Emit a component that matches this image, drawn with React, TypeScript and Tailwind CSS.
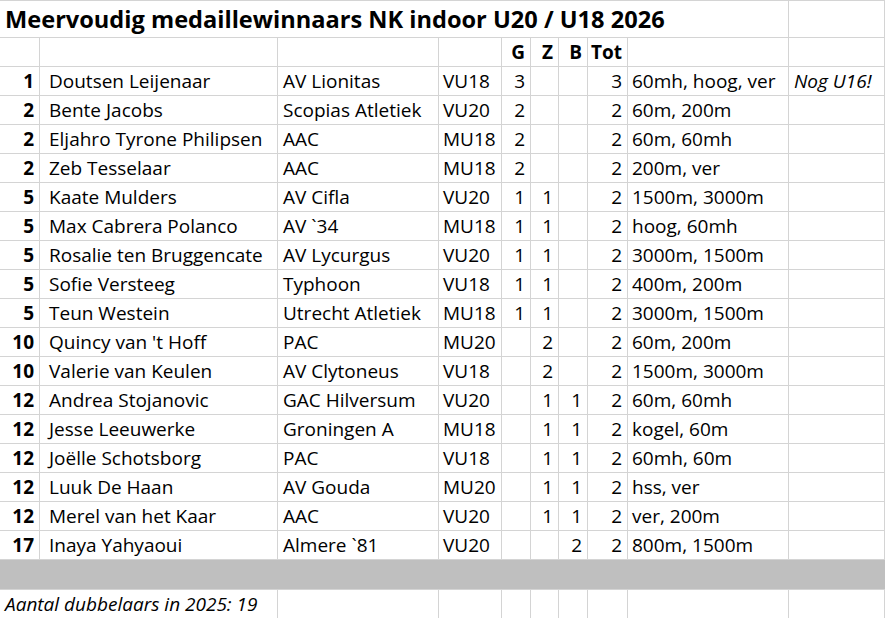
import React from "react";

type Row = {
  rank: string;
  name: string;
  club: string;
  cat: string;
  g: string;
  z: string;
  b: string;
  tot: string;
  events: string;
  note?: string;
};

const rows: Row[] = [
  { rank: "1", name: "Doutsen Leijenaar", club: "AV Lionitas", cat: "VU18", g: "3", z: "", b: "", tot: "3", events: "60mh, hoog, ver", note: "Nog U16!" },
  { rank: "2", name: "Bente Jacobs", club: "Scopias Atletiek", cat: "VU20", g: "2", z: "", b: "", tot: "2", events: "60m, 200m" },
  { rank: "2", name: "Eljahro Tyrone Philipsen", club: "AAC", cat: "MU18", g: "2", z: "", b: "", tot: "2", events: "60m, 60mh" },
  { rank: "2", name: "Zeb Tesselaar", club: "AAC", cat: "MU18", g: "2", z: "", b: "", tot: "2", events: "200m, ver" },
  { rank: "5", name: "Kaate Mulders", club: "AV Cifla", cat: "VU20", g: "1", z: "1", b: "", tot: "2", events: "1500m, 3000m" },
  { rank: "5", name: "Max Cabrera Polanco", club: "AV `34", cat: "MU18", g: "1", z: "1", b: "", tot: "2", events: "hoog, 60mh" },
  { rank: "5", name: "Rosalie ten Bruggencate", club: "AV Lycurgus", cat: "VU20", g: "1", z: "1", b: "", tot: "2", events: "3000m, 1500m" },
  { rank: "5", name: "Sofie Versteeg", club: "Typhoon", cat: "VU18", g: "1", z: "1", b: "", tot: "2", events: "400m, 200m" },
  { rank: "5", name: "Teun Westein", club: "Utrecht Atletiek", cat: "MU18", g: "1", z: "1", b: "", tot: "2", events: "3000m, 1500m" },
  { rank: "10", name: "Quincy van 't Hoff", club: "PAC", cat: "MU20", g: "", z: "2", b: "", tot: "2", events: "60m, 200m" },
  { rank: "10", name: "Valerie van Keulen", club: "AV Clytoneus", cat: "VU18", g: "", z: "2", b: "", tot: "2", events: "1500m, 3000m" },
  { rank: "12", name: "Andrea Stojanovic", club: "GAC Hilversum", cat: "VU20", g: "", z: "1", b: "1", tot: "2", events: "60m, 60mh" },
  { rank: "12", name: "Jesse Leeuwerke", club: "Groningen A", cat: "MU18", g: "", z: "1", b: "1", tot: "2", events: "kogel, 60m" },
  { rank: "12", name: "Joëlle Schotsborg", club: "PAC", cat: "VU18", g: "", z: "1", b: "1", tot: "2", events: "60mh, 60m" },
  { rank: "12", name: "Luuk De Haan", club: "AV Gouda", cat: "MU20", g: "", z: "1", b: "1", tot: "2", events: "hss, ver" },
  { rank: "12", name: "Merel van het Kaar", club: "AAC", cat: "VU20", g: "", z: "1", b: "1", tot: "2", events: "ver, 200m" },
  { rank: "17", name: "Inaya Yahyaoui", club: "Almere `81", cat: "VU20", g: "", z: "", b: "2", tot: "2", events: "800m, 1500m" },
];

const cell = "h-[29px] border-r border-b border-[#d4d4d4] flex items-end pb-[1px] whitespace-nowrap overflow-visible";
const left = `${cell} pl-[4px]`;
const right = `${cell} justify-end pr-[5px]`;

const App: React.FC = () => {
  return (
    <div
      className="w-[885px] h-[618px] bg-white text-black text-[19px] leading-[26px] overflow-hidden"
      style={{ fontFamily: "'Open Sans', Lato, sans-serif" }}
    >
      <div className="grid grid-cols-[40px_238px_161px_63px_29px_28px_29px_40px_161px_96px] border-t border-[#d4d4d4]">
        {/* title */}
        <div className="col-span-9 h-[37px] border-r border-b border-[#d4d4d4] flex items-end pb-[2px] pl-[5px] whitespace-nowrap text-[23.6px] leading-[32px] font-bold">
          Meervoudig medaillewinnaars NK indoor U20 / U18 2026
        </div>
        <div className="h-[37px] border-r border-b border-[#d4d4d4]" />

        {/* header */}
        <div className={cell} />
        <div className={cell} />
        <div className={cell} />
        <div className={cell} />
        <div className={`${right} font-bold`}>G</div>
        <div className={`${right} font-bold`}>Z</div>
        <div className={`${right} font-bold`}>B</div>
        <div className={`${right} font-bold`}>Tot</div>
        <div className={cell} />
        <div className={cell} />

        {rows.map((r, i) => (
          <React.Fragment key={i}>
            <div className={`${right} pr-[4px] font-bold`}>{r.rank}</div>
            <div className={`${left} pl-[9px]`}>{r.name}</div>
            <div className={`${left} pl-[5px]`}>{r.club}</div>
            <div className={left}>{r.cat}</div>
            <div className={right}>{r.g}</div>
            <div className={right}>{r.z}</div>
            <div className={right}>{r.b}</div>
            <div className={right}>{r.tot}</div>
            <div className={`${left} pl-[3px]`}>{r.events}</div>
            <div className={`${left} pl-[5px] italic`}>{r.note ?? ""}</div>
          </React.Fragment>
        ))}

        {/* gray separator */}
        <div className="col-span-10 h-[30px] bg-[#bfbfbf] border-b border-[#d4d4d4]" />

        {/* footer */}
        <div className={`col-span-2 ${left} pl-[5px] italic`}>Aantal dubbelaars in 2025: 19</div>
        <div className={cell} />
        <div className={cell} />
        <div className={cell} />
        <div className={cell} />
        <div className={cell} />
        <div className={cell} />
        <div className={cell} />
        <div className={cell} />
      </div>
    </div>
  );
};

export default App;
